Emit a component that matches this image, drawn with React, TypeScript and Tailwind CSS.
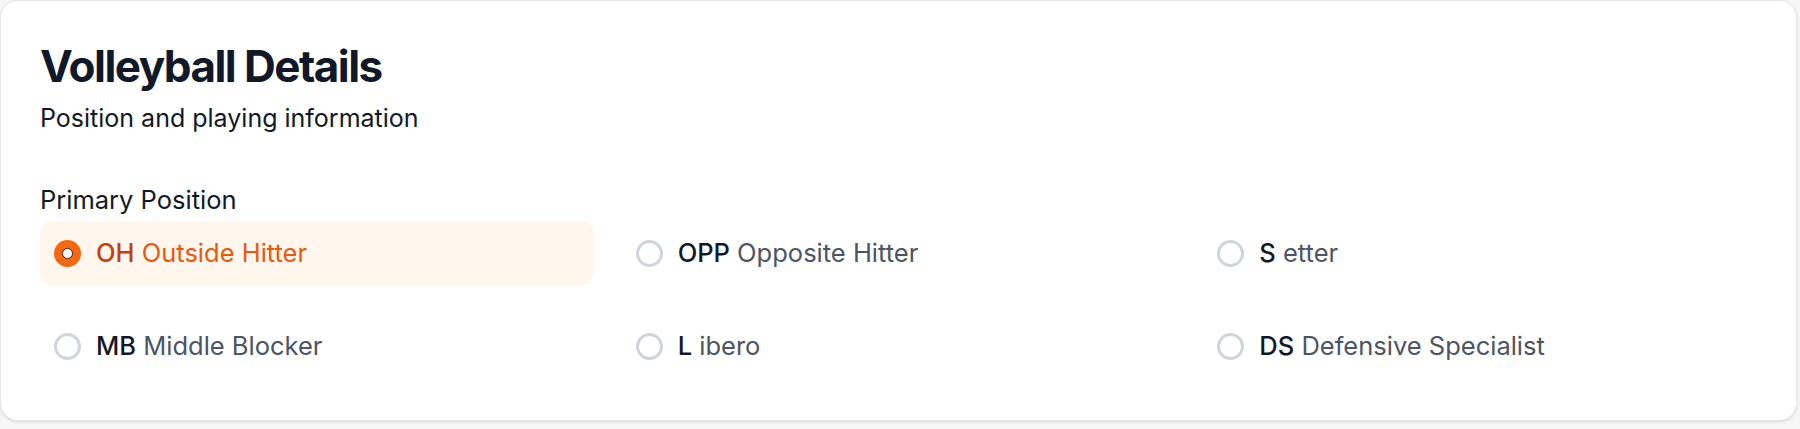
import { useState } from 'react'

const POSITIONS = [
  { code: 'OH', name: 'Outside Hitter' },
  { code: 'OPP', name: 'Opposite Hitter' },
  { code: 'S', name: 'etter' },
  { code: 'MB', name: 'Middle Blocker' },
  { code: 'L', name: 'ibero' },
  { code: 'DS', name: 'Defensive Specialist' },
]

function Radio({ checked }: { checked: boolean }) {
  if (checked) {
    return (
      <span className="flex h-[27px] w-[27px] shrink-0 items-center justify-center rounded-full bg-[#f7670f]">
        <span className="h-[11px] w-[11px] rounded-full border border-[#1f2937] bg-white" />
      </span>
    )
  }
  return <span className="h-[27px] w-[27px] shrink-0 rounded-full border-[3px] border-[#d1d5db] bg-white" />
}

export default function App() {
  const [selected, setSelected] = useState('OH')

  return (
    <div className="min-h-screen bg-[#f6f6f7] pr-[3px] pb-[9px]" style={{ fontFamily: 'Inter, "Noto Sans", sans-serif' }}>
      <div className="rounded-[18px] border border-[#e5e7eb] bg-white pt-[38px] pr-[39px] pb-[41px] pl-[39px] shadow-sm">
        <h1 className="text-[44px] leading-[54px] font-bold tracking-[-0.035em] text-[#111827]">Volleyball Details</h1>
        <p className="mt-[7px] text-[25px] leading-[36px] text-[#111827]">Position and playing information</p>

        <p className="mt-[46px] text-[25.5px] leading-[36px] text-[#111827]">Primary Position</p>
        <div className="mt-[3px] grid grid-cols-3 gap-[28px]">
          {POSITIONS.map(p => {
            const checked = selected === p.code
            return (
              <button key={p.code} onClick={() => setSelected(p.code)}
                className={`flex h-[65px] items-center gap-[15px] rounded-[14px] px-[14px] text-left text-[25.5px] ${checked ? 'bg-[#fff7ed]' : ''}`}>
                <Radio checked={checked} />
                <span>
                  <span className={`font-medium ${checked ? 'text-[#c2410c]' : 'text-[#111827]'}`}>{p.code}</span>{' '}
                  <span className={checked ? 'text-[#ea580c]' : 'text-[#4b5563]'}>{p.name}</span>
                </span>
              </button>
            )
          })}
        </div>
      </div>
    </div>
  )
}
